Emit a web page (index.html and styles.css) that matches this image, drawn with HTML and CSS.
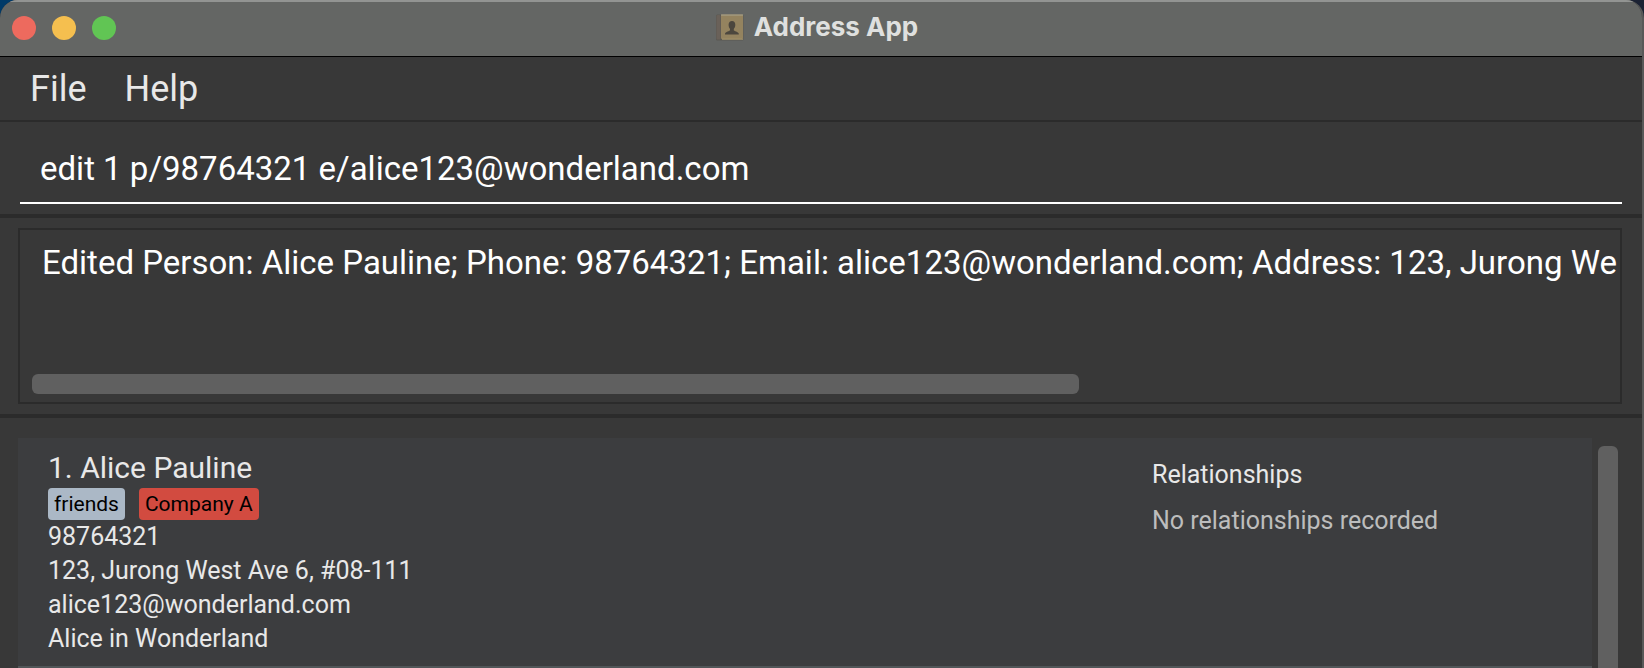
FILE: index.html
```html
<!DOCTYPE html>
<html lang="en">
<head>
<meta charset="utf-8">
<title>Address App</title>
<link rel="stylesheet" href="styles.css">
</head>
<body>
<div class="window">
  <header class="titlebar">
    <div class="lights">
      <button class="light light-close" type="button" aria-label="Close"></button>
      <button class="light light-minimize" type="button" aria-label="Minimize"></button>
      <button class="light light-zoom" type="button" aria-label="Zoom"></button>
    </div>
    <h1 class="title">
      <svg class="book" viewBox="0 0 28 27" aria-hidden="true">
        <rect x="0" y="0.500" width="27.500" height="26" rx="1.500" fill="#5b5852"/>
        <rect x="0.500" y="1" width="4" height="24.500" rx="1" fill="#6a6159"/>
        <rect x="5" y="0.500" width="22" height="24.500" rx="1" fill="#94835f"/>
        <path d="M5 1h22" stroke="#aaa58f"/>
        <path d="M6 25.200h21" stroke="#a7976f"/>
        <path d="M16 7c2.100 0 3.300 1.600 3.300 3.800 0 1.800-.6 3.200-1.500 4.100v1.300c0 .8 4.700 1.500 5 3.600v.7H9v-.7c.3-2.100 5-2.800 5-3.600v-1.300c-.8-.9-1.400-2.300-1.400-4.100C12.600 8.600 13.900 7 16 7z" fill="#4c473e"/>
      </svg>
      <span>Address App</span>
    </h1>
  </header>

  <nav class="menubar" aria-label="Main menu">
    <button class="menu" type="button">File</button>
    <button class="menu" type="button">Help</button>
  </nav>

  <form class="command">
    <input class="command-input" type="text" aria-label="Command" spellcheck="false" value="edit 1 p/98764321 e/alice123@wonderland.com">
  </form>

  <section class="result" aria-label="Result">
    <div class="result-box">
      <textarea class="result-text" aria-label="Result message" readonly wrap="off" rows="1" spellcheck="false">Edited Person: Alice Pauline; Phone: 98764321; Email: alice123@wonderland.com; Address: 123, Jurong West Ave 6, #08-111</textarea>
      <div class="track"><div class="thumb"></div></div>
    </div>
  </section>

  <main class="people">
    <ul class="list">
      <li class="card">
        <div class="person">
          <h2 class="name">1. Alice Pauline</h2>
          <div class="tags">
            <span class="tag tag-friends">friends</span>
            <span class="tag tag-company">Company A</span>
          </div>
          <p class="detail">98764321</p>
          <p class="detail">123, Jurong West Ave 6, #08-111</p>
          <p class="detail">alice123@wonderland.com</p>
          <p class="detail">Alice in Wonderland</p>
        </div>
        <div class="relations">
          <h3 class="relations-title">Relationships</h3>
          <p class="relations-empty">No relationships recorded</p>
        </div>
      </li>
    </ul>
    <div class="list-thumb"></div>
  </main>
</div>
</body>
</html>
```
FILE: styles.css
```css
* {
  box-sizing: border-box;
  margin: 0;
  padding: 0;
}

body {
  background: linear-gradient(90deg, #003a68 50%, #1b2233 50%);
  color: #e8e8e8;
  font-family: Roboto, "Liberation Sans", sans-serif;
  overflow: hidden;
}

button,
input,
textarea {
  font: inherit;
  color: inherit;
  background: none;
  border: 0;
  outline: 0;
}

.window {
  display: flex;
  flex-direction: column;
  height: 100vh;
  border-right: 2px solid #585858;
  border-radius: 18px 18px 0 0;
  background: #383838;
  overflow: hidden;
}

.titlebar {
  display: grid;
  grid-template-columns: 1fr auto 1fr;
  align-items: center;
  flex: none;
  height: 57px;
  padding: 0 12px 2px;
  border-top: 2px solid #929492;
  border-bottom: 1px solid #000000;
  background: #646664;
}

.lights {
  display: flex;
  gap: 16px;
}

.light {
  width: 24px;
  height: 24px;
  border-radius: 50%;
}

.light-close { background: #ed6a5e; }
.light-minimize { background: #f5bf4f; }
.light-zoom { background: #61c554; }

.title {
  display: flex;
  align-items: center;
  gap: 10px;
  padding: 0 8px 2px 0;
  color: #dfe0df;
  font-family: Inter, "Liberation Sans", sans-serif;
  font-size: 26px;
  line-height: 32px;
  font-weight: 700;
}

.book {
  width: 28px;
  height: 27px;
}

.menubar {
  display: flex;
  flex: none;
  gap: 38px;
  padding: 9px 30px 7px;
  border-bottom: 2px solid #2b2b2b;
}

.menu {
  font-size: 36px;
  line-height: 47px;
}

.command {
  flex: none;
  padding: 20px 20px 10px;
  border-bottom: 4px solid #2b2b2b;
}

.command-input {
  display: block;
  width: 100%;
  height: 62px;
  padding: 0 20px 8px;
  border-bottom: 2px solid #ffffff;
  color: #ffffff;
  font-size: 33px;
}

.result {
  flex: none;
  padding: 10px 20px 10px 18px;
  border-bottom: 4px solid #2b2b2b;
}

.result-box {
  padding: 12px 2px 8px 12px;
  border: 2px solid #2b2b2b;
}

.result-text {
  display: block;
  width: 100%;
  height: 132px;
  padding-left: 10px;
  color: #ffffff;
  font-size: 33px;
  line-height: 42px;
  resize: none;
  overflow: hidden;
}

.track {
  margin-right: 12px;
}

.thumb {
  width: 66.5%;
  height: 20px;
  border-radius: 6px;
  background: #606060;
}

.people {
  display: flex;
  flex: 1;
  gap: 6px;
  min-height: 0;
  padding: 20px 24px 0 18px;
}

.list {
  flex: 1;
  list-style: none;
}

.card {
  display: grid;
  grid-template-columns: 1104fr 440fr;
  padding: 10px 0 0 30px;
  border-bottom: 2px solid #515658;
  background: #3c3d3f;
}

.name {
  font-size: 30px;
  line-height: 40px;
  font-weight: 400;
}

.tags {
  display: flex;
  gap: 14px;
}

.tag {
  padding: 0 6px;
  border-radius: 4px;
  color: #000000;
  font-size: 21px;
  line-height: 32px;
}

.tag-friends { background: #abb8c6; }
.tag-company { background: #d24b40; }

.detail {
  font-size: 25px;
  line-height: 34px;
}

.person {
  padding-bottom: 10px;
}

.relations {
  display: flex;
  flex-direction: column;
  gap: 12px;
  padding-top: 10px;
}

.relations-title,
.relations-empty {
  font-size: 25px;
  line-height: 34px;
  font-weight: 400;
}

.relations-empty {
  color: #bdbdbd;
}

.list-thumb {
  width: 20px;
  margin-top: 8px;
  border-radius: 6px 6px 0 0;
  background: #606060;
}
```
